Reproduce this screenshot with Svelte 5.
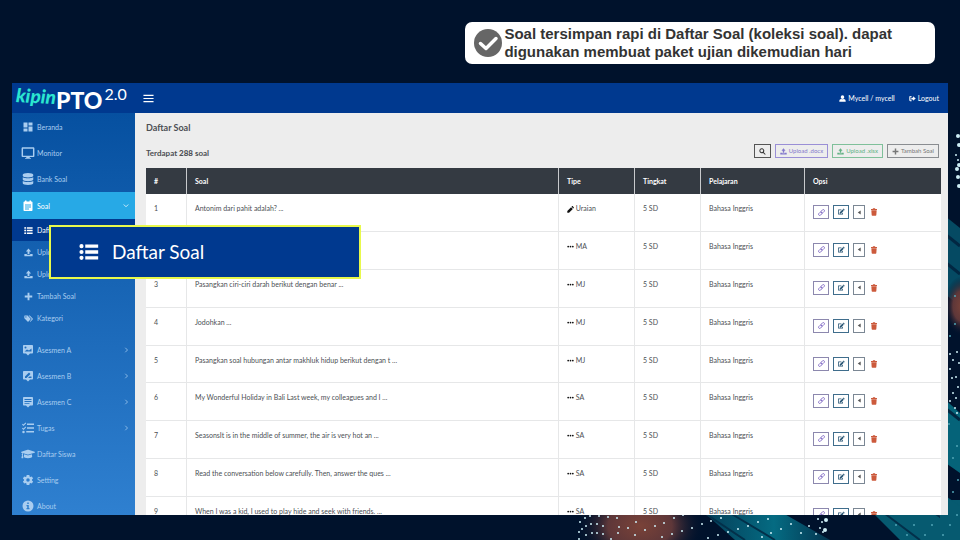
<script>
  const icons = {
    dashboard: ['0 0 24 24', 'M3 13h8V3H3v10zm0 8h8v-6H3v6zm10 0h8V11h-8v10zm0-18v6h8V3h-8z'],
    monitor: ['0 1 24 22', 'M21 2H3c-1.100 0-2 .9-2 2v13c0 1.100.9 2 2 2h6v1.500H7V22h10v-1.500h-2V19h6c1.100 0 2-.9 2-2V4c0-1.100-.9-2-2-2zm-.5 14.500h-17v-12h17v12z'],
    database: ['0 0 448 512', 'M448 73v46c0 40-100 73-224 73S0 159 0 119V73C0 33 100 0 224 0s224 33 224 73zM448 176v103c0 40-100 73-224 73S0 319 0 279V176c48 33 136 49 224 49s176-16 224-49zm0 160v103c0 40-100 73-224 73S0 479 0 439V336c48 33 136 49 224 49s176-16 224-49z'],
    event: ['0 0 24 24', 'M19 3h-1V1h-3v2H9V1H6v2H5c-1.100 0-2 .9-2 2v15c0 1.100.9 2 2 2h14c1.100 0 2-.9 2-2V5c0-1.100-.9-2-2-2zM6 9h12v2H6V9zm0 4h12v2H6v-2zm0 4h8v2H6v-2z'],
    list: ['0 0 24 24', 'M3 2.500a2.500 2.500 0 1 1 0 5 2.500 2.500 0 0 1 0-5zm0 7a2.500 2.500 0 1 1 0 5 2.500 2.500 0 0 1 0-5zm0 7a2.500 2.500 0 1 1 0 5 2.500 2.500 0 0 1 0-5zM7.500 3h15.500v4H7.500V3zm0 7h15.500v4H7.500v-4zm0 7h15.500v4H7.500v-4z'],
    upload: ['0 0 24 24', 'M9.500 16V9H5l7-8 7 8h-4.500v7h-5zM1 16h6.500v2h9v-2H23v6H1v-6z'],
    plus: ['0 0 24 24', 'M9.500 2h5v7.500H22v5h-7.500V22h-5v-7.500H2v-5h7.500V2z'],
    tags: ['0 0 28 24', 'M1 4v7l10 10c1 1 2 1 3 0l6-6c1-1 1-2 0-3L11 3H2L1 4zm5 1a2 2 0 1 1 0 4 2 2 0 0 1 0-4zM14 3h4l9 9c1 1 1 2 0 3l-7 7-2-1 5-6c1-1 1-2 0-3l-9-9z'],
    image: ['0 0 24 24', 'M4 2h16c1.100 0 2 .9 2 2v13c0 1.100-.9 2-2 2h-4l-4 4-4-4H4c-1.100 0-2-.9-2-2V4c0-1.100.9-2 2-2zm1 13h14V9l-5 4-4-2-5 4zM7 5a2 2 0 1 0 0 4 2 2 0 0 0 0-4z'],
    review: ['0 0 24 24', 'M4 2h16c1.100 0 2 .9 2 2v13c0 1.100-.9 2-2 2h-4l-4 4-4-4H4c-1.100 0-2-.9-2-2V4c0-1.100.9-2 2-2zm2 14h3l8-8-3-3-8 8v3zm6 0h7v-3h-4l-3 3z'],
    comment: ['0 0 24 24', 'M4 2h16c1.100 0 2 .9 2 2v13c0 1.100-.9 2-2 2h-4l-4 4-4-4H4c-1.100 0-2-.9-2-2V4c0-1.100.9-2 2-2zm1 4v2h14V6H5zm0 4v2h14v-2H5zm0 4v1.500h10V14H5z'],
    tasks: ['0 0 24 22', 'M0 4l1.500-1.500L3 4l4-4 1.500 1.500L3 7 0 4zm0 8l1.500-1.500L3 12l4-4 1.500 1.500L3 15l-3-3zm3 4.500a2.500 2.500 0 1 1 0 5 2.500 2.500 0 0 1 0-5zM10 2h14v3H10V2zm0 7.500h14v3H10v-3zM8.500 17H24v3H8.500v-3z'],
    cap: ['0 0 640 512', 'M622 153L343 67c-15-4-31-4-47 0L18 153c-24 7-24 38 0 46l48 15c-10 13-17 29-18 47-9 5-16 15-16 27 0 11 6 20 14 26L20 429c-2 10 6 19 16 19h56c10 0 18-9 16-19L82 314c8-6 14-15 14-26 0-12-6-21-16-27 1-15 9-28 21-37l196 60c9 3 26 7 46 0l279-85c24-7 24-38 0-46zM353 315c-29 9-53 4-66 0l-145-44-14 113c0 35 86 64 192 64s192-29 192-64l-14-113-145 44z'],
    cog: ['0 0 24 24', 'M19.900 13.200a8 8 0 0 0 0-2.400l2.300-1.700-2.400-4.200-2.700 1.100a8 8 0 0 0-2-1.200L14.700 2H9.300l-.4 2.800a8 8 0 0 0-2 1.200L4.200 4.900 1.800 9.100l2.300 1.700a8 8 0 0 0 0 2.400l-2.300 1.700 2.400 4.200L6.900 18a8 8 0 0 0 2 1.200l.4 2.800h5.400l.4-2.800a8 8 0 0 0 2-1.200l2.700 1.100 2.400-4.200-2.300-1.700zM12 15.500a3.500 3.500 0 1 1 0-7 3.500 3.500 0 0 1 0 7z'],
    info: ['0 0 24 24', 'M12 1a11 11 0 1 0 0 22 11 11 0 0 0 0-22zm-1.500 4h3v3h-3V5zM9 10h4.500v6H15v2.500H9V16h1.500v-3.500H9V10z'],
    user: ['0 0 24 24', 'M12 1a6 6 0 0 1 6 6v1a6 6 0 0 1-12 0V7a6 6 0 0 1 6-6zM1 22c0-5 3-8 7-8 2 1 6 1 8 0 4 0 7 3 7 8v1H1v-1z'],
    logout: ['0 0 24 24', 'M9 3v3H5v12h4v3H4c-1.700 0-3-1.300-3-3V6c0-1.700 1.300-3 3-3h5zm5 1l9 8-9 8v-5H8V9h6V4z'],
    search: ['0 0 24 24', 'M9.500 1a8.500 8.500 0 0 1 6.900 13.500l6.600 6.500-2.500 2.500-6.500-6.600A8.500 8.500 0 1 1 9.500 1zm0 3.500a5 5 0 1 0 0 10 5 5 0 0 0 0-10z'],
    pencil: ['0 0 24 24', 'M1 17L14 4l6 6L7 23H1v-6zM15.500 2.500L17 1c1-1 2-1 3 0l3 3c1 1 1 2 0 3l-1.500 1.500-6-6z'],
    dots: ['0 0 24 24', 'M4 9a3 3 0 1 1 0 6 3 3 0 0 1 0-6zm8 0a3 3 0 1 1 0 6 3 3 0 0 1 0-6zm8 0a3 3 0 1 1 0 6 3 3 0 0 1 0-6z'],
    edit: ['0 0 26 24', 'M15 4H5c-1 0-1.500.5-1.500 1.500V19c0 1 .5 1.500 1.500 1.500h13c1 0 1.500-.5 1.500-1.500v-5l-2.500 2v2H6V6.500h7L15 4zM9 13l9-9 4 4-9 9H9v-4zM19 3l2-2 4 4-2 2-4-4z'],
    back: ['0 0 24 24', 'M16 5v14L6 12l10-7z'],
    trash: ['0 0 20 24', 'M1 3h5l1-2h6l1 2h5v3H1V3zm1 4h16l-1 14c0 1-1 2-2 2H5c-1 0-2-1-2-2L2 7z'],
    bars: ['0 0 24 24', 'M1 4h22v2.500H1V4zm0 6.700h22v2.500H1v-2.500zm0 6.800h22V20H1v-2.500z']
  };

  const topMenu = [
    { icon: 'dashboard', label: 'Beranda' },
    { icon: 'monitor', label: 'Monitor', wide: true },
    { icon: 'database', label: 'Bank Soal' },
    { icon: 'event', label: 'Soal', active: true }
  ];

  const subMenu = [
    { icon: 'list', label: 'Daftar Soal', active: true },
    { icon: 'upload', label: 'Upload .docx' },
    { icon: 'upload', label: 'Upload .xlsx' },
    { icon: 'plus', label: 'Tambah Soal' },
    { icon: 'tags', label: 'Kategori' }
  ];

  const bottomMenu = [
    { icon: 'image', label: 'Asesmen A', more: true },
    { icon: 'review', label: 'Asesmen B', more: true },
    { icon: 'comment', label: 'Asesmen C', more: true },
    { icon: 'tasks', label: 'Tugas', more: true },
    { icon: 'cap', label: 'Daftar Siswa', wide: true },
    { icon: 'cog', label: 'Setting' },
    { icon: 'info', label: 'About' }
  ];

  // the second row lies under the callout up to its type column
  const rows = [
    { no: 1, soal: 'Antonim dari pahit adalah? ...', tipe: 'Uraian' },
    { no: '', soal: '', tipe: 'MA' },
    { no: 3, soal: 'Pasangkan ciri-ciri darah berikut dengan benar ...', tipe: 'MJ' },
    { no: 4, soal: 'Jodohkan ...', tipe: 'MJ' },
    { no: 5, soal: 'Pasangkan soal hubungan antar makhluk hidup berikut dengan t ...', tipe: 'MJ' },
    { no: 6, soal: 'My Wonderful Holiday in Bali Last week, my colleagues and I ...', tipe: 'SA' },
    { no: 7, soal: 'SeasonsIt is in the middle of summer, the air is very hot an ...', tipe: 'SA' },
    { no: 8, soal: 'Read the conversation below carefully. Then, answer the ques ...', tipe: 'SA' },
    { no: 9, soal: 'When I was a kid, I used to play hide and seek with friends. ...', tipe: 'SA' }
  ];

  // bright specks of the backdrop, as [x, y, radius]
  const specks = [
    [580, 522, 1], [585, 518, 1], [590, 516, 1], [599, 516, 1], [608, 517, 1], [579, 532, 1], [582, 529, 1],
    [586, 526, 1], [591, 524, 1], [597, 524, 1], [603, 526, 1], [586, 535, 1], [592, 533, 1], [597, 533, 1],
    [603, 534, 1], [579, 539, 1], [611, 539, 1], [617, 518, 1], [619, 527, 1], [618, 533, 1], [636, 522, 1],
    [628, 528, 1], [635, 535, 1], [645, 530, 1], [655, 526, 1], [664, 523, 1], [674, 518, 1], [683, 515, 1],
    [662, 537, 1], [672, 534, 1], [682, 531, 1], [692, 528, 1], [702, 524, 1], [711, 521, 1], [721, 518, 1],
    [708, 538, 1], [718, 535, 1], [728, 532, 1], [738, 529, 1], [748, 526, 1], [758, 522, 1], [768, 519, 1],
    [762, 537, 1], [771, 533, 1], [781, 529, 1], [791, 524, 1], [801, 533, 1], [809, 526, 1], [818, 519, 1],
    [816, 534, 1], [820, 528, 1], [822, 522, 1], [826, 520, 2], [825, 530, 2], [823, 532, 1],
    [958, 136, 2], [959, 145, 2], [956, 155, 1], [958, 160, 1], [959, 165, 2], [957, 169, 2], [958, 177, 2], [959, 186, 2],
    [950, 354, 1], [957, 352, 1], [953, 360, 1], [959, 363, 1], [950, 369, 1], [952, 378, 1], [956, 377, 1],
    [958, 387, 1], [953, 393, 1], [956, 398, 1], [950, 401, 1], [955, 408, 1], [957, 413, 1]
  ];
  const faintSpecks = [
    [914, 525], [932, 525], [950, 525], [907, 535], [925, 535], [943, 535], [896, 525], [950, 336], [955, 324],
    [949, 424], [957, 446], [953, 458], [958, 480], [953, 492], [957, 515], [955, 296]
  ];
</script>

{#snippet icon(name)}
  <svg class="icon" viewBox={icons[name][0]} aria-hidden="true">
    <path d={icons[name][1]} fill-rule="evenodd" />
  </svg>
{/snippet}

{#snippet linkIcon()}
  <svg class="icon" viewBox="0 0 24 24" aria-hidden="true">
    <g fill="none" stroke="currentColor" stroke-width="3">
      <rect x="10" y="4" width="13" height="8" rx="4" transform="rotate(-45 16 8)" />
      <rect x="1" y="12" width="13" height="8" rx="4" transform="rotate(-45 8 16)" />
    </g>
  </svg>
{/snippet}

{#snippet menuItem(item)}
  <a href="#menu" class="item" class:active={item.active}>
    <span class="item-icon" class:wide={item.wide}>{@render icon(item.icon)}</span>
    <span>{item.label}</span>
    {#if item.more || item.active}
      <svg class="chevron" viewBox="0 0 8 8" aria-hidden="true">
        <path d={item.active ? 'M1 2l3 3 3-3' : 'M3 1l3 3-3 3'} />
      </svg>
    {/if}
  </a>
{/snippet}

<div class="page">
  <svg class="backdrop" viewBox="0 0 960 540" preserveAspectRatio="xMaxYMax slice" aria-hidden="true">
    <defs>
      <linearGradient id="teal" x1="0" y1="0" x2="1" y2="0">
        <stop offset="0" stop-color="#04344f" />
        <stop offset="0.6" stop-color="#056b82" />
        <stop offset="1" stop-color="#04344f" />
      </linearGradient>
      <radialGradient id="rust">
        <stop offset="0" stop-color="#7a4238" />
        <stop offset="0.5" stop-color="#5e3739" />
        <stop offset="1" stop-color="#00122c" stop-opacity="0" />
      </radialGradient>
    </defs>
    <ellipse cx="640" cy="526" rx="64" ry="44" fill="url(#rust)" />
    <path d="M690 500h70l70 40h-95z" fill="url(#teal)" />
    <path d="M860 500h100v40h-60z" fill="#065a70" />
    <path d="M700 510l45 30M725 510l50 30M880 510l40 30M930 510l20 14" stroke="#03304a" stroke-width="2" />
    <path d="M940 212l20 16v78l-20-16z" fill="#054a63" />
    <ellipse cx="962" cy="306" rx="18" ry="30" fill="url(#rust)" />
    <path d="M940 395l20 18v60l-20-14z" fill="#056379" />
    <path d="M940 492l20 14v34h-20z" fill="#065a70" />
    <path d="M940 230l20 16M940 258l20 16M940 404l20 16" stroke="#022742" stroke-width="3" />
    {#each specks as [x, y, r]}
      <circle cx={x} cy={y} {r} fill="#cdeef6" />
    {/each}
    {#each faintSpecks as [x, y]}
      <circle cx={x} cy={y} r="1" fill="#4fa3b5" />
    {/each}
  </svg>

  <div class="note">
    <svg class="check" viewBox="0 0 28 28" aria-hidden="true">
      <circle cx="14" cy="14" r="14" fill="#666" />
      <path d="M6.500 14.500l5.500 5L22 9.500" fill="none" stroke="#fff" stroke-width="3.500" stroke-linecap="round" stroke-linejoin="round" />
    </svg>
    <p>Soal tersimpan rapi di Daftar Soal (koleksi soal). dapat<br />digunakan membuat paket ujian dikemudian hari</p>
  </div>

  <div class="window">
    <header>
      <a href="#home" class="logo">
        <span class="kipin">kipin</span><span class="pto">PTO</span><span class="version">2.0</span>
      </a>
      <button class="toggle" aria-label="Menu">{@render icon('bars')}</button>
      <nav class="account">
        <a href="#profile">{@render icon('user')} Mycell / mycell</a>
        <a href="#logout">{@render icon('logout')} Logout</a>
      </nav>
    </header>

    <div class="body">
      <nav class="sidebar">
        {#each topMenu as item}
          {@render menuItem(item)}
        {/each}
        <div class="submenu">
          {#each subMenu as item}
            <a href="#submenu" class="subitem" class:active={item.active}>
              <span class="item-icon">{@render icon(item.icon)}</span>
              <span>{item.label}</span>
            </a>
          {/each}
        </div>
        {#each bottomMenu as item}
          {@render menuItem(item)}
        {/each}
      </nav>

      <main>
        <h1>Daftar Soal</h1>
        <div class="toolbar">
          <h2>Terdapat <b>288</b> soal</h2>
          <button class="search" aria-label="Cari">{@render icon('search')}</button>
          <button class="docx">{@render icon('upload')} Upload .docx</button>
          <button class="xlsx">{@render icon('upload')} Upload .xlsx</button>
          <button>{@render icon('plus')} Tambah Soal</button>
        </div>

        <table>
          <thead>
            <tr>
              <th class="no">#</th>
              <th>Soal</th>
              <th class="tipe">Tipe</th>
              <th class="tingkat">Tingkat</th>
              <th class="pelajaran">Pelajaran</th>
              <th class="opsi">Opsi</th>
            </tr>
          </thead>
          <tbody>
            {#each rows as row}
              <tr>
                <td>{row.no}</td>
                <td>{row.soal}</td>
                <td><span class="kind">{@render icon(row.tipe === 'Uraian' ? 'pencil' : 'dots')}</span> {row.tipe}</td>
                <td>5 SD</td>
                <td>Bahasa Inggris</td>
                <td class="options">
                  <div class="actions">
                    <button class="link" aria-label="Tautan">{@render linkIcon()}</button>
                    <button class="edit" aria-label="Ubah">{@render icon('edit')}</button>
                    <button class="back" aria-label="Kembali">{@render icon('back')}</button>
                    <button class="trash" aria-label="Hapus">{@render icon('trash')}</button>
                  </div>
                </td>
              </tr>
            {/each}
          </tbody>
        </table>
      </main>
    </div>
  </div>

  <div class="callout">
    {@render icon('list')}
    <span>Daftar Soal</span>
  </div>
</div>

<style>
  :global(body) {
    background: #00122c;
  }

  .page {
    position: relative;
    display: flex;
    flex-direction: column;
    box-sizing: border-box;
    height: 100vh;
    padding: 22px 12px 25px;
    overflow: hidden;
    font-family: Lato, 'Noto Sans', sans-serif;
    font-size: 7px;
    line-height: 10px;
    color: #4c4f54;
  }

  .backdrop {
    position: absolute;
    inset: 0;
    width: 100%;
    height: 100%;
  }

  a {
    color: inherit;
    text-decoration: none;
  }

  button {
    padding: 0;
    border: 0;
    background: none;
    color: inherit;
    font: inherit;
    cursor: pointer;
  }

  .icon {
    display: block;
    flex: none;
    width: 7px;
    height: 7px;
    fill: currentColor;
  }

  .note {
    position: relative;
    display: flex;
    align-items: center;
    align-self: flex-end;
    gap: 2px;
    box-sizing: border-box;
    min-height: 42px;
    margin: 0 13px 19px 0;
    padding: 0 43px 0 9px;
    border-radius: 7px;
    background: #fff;
  }

  .note p {
    margin: 0;
    font: bold 15px/18px 'Liberation Sans', Arial, sans-serif;
    color: #333;
    white-space: nowrap;
  }

  .check {
    flex: none;
    width: 28px;
    height: 28px;
  }

  .window {
    position: relative;
    display: flex;
    flex: 1;
    flex-direction: column;
    min-height: 0;
    overflow: hidden;
    background: #ededed;
  }

  header {
    display: flex;
    flex: none;
    align-items: center;
    height: 30px;
    padding-right: 9px;
    background: #00398f;
    color: #fff;
  }

  .logo {
    display: flex;
    align-items: center;
    width: 127px;
    padding-left: 4px;
  }

  .kipin {
    margin-top: -4px;
    font: italic 900 19px/22px Lato, sans-serif;
    color: #2be6d0;
    transform: rotate(3deg);
  }

  .pto {
    margin-top: 4px;
    font: 900 23px/24px Lato, sans-serif;
  }

  .version {
    margin: -9px 0 0 2px;
    font: 16px/18px Lato, sans-serif;
  }

  .toggle .icon {
    width: 11px;
    height: 11px;
  }

  .account {
    display: flex;
    gap: 14px;
    margin-left: auto;
  }

  .account a {
    display: flex;
    align-items: center;
    gap: 2px;
  }

  .body {
    display: flex;
    flex: 1;
    min-height: 0;
  }

  .sidebar {
    flex: none;
    box-sizing: border-box;
    width: 123px;
    padding-top: 1px;
    overflow: hidden;
    background: linear-gradient(#0650a0, #2f80d0);
    color: #a9cdf0;
  }

  .item,
  .subitem {
    display: flex;
    align-items: center;
    height: 26px;
    padding: 0 6px 0 9px;
  }

  .item.active {
    height: 27px;
    background: #27a9e6;
    color: #fff;
  }

  .item-icon {
    display: flex;
    justify-content: center;
    width: 14px;
    margin-right: 2px;
  }

  .item-icon .icon {
    width: 12px;
    height: 12px;
  }

  .item-icon.wide .icon {
    width: 14px;
    height: 14px;
  }

  .submenu {
    padding-bottom: 8px;
  }

  .subitem {
    height: 22px;
  }

  .subitem .item-icon .icon {
    width: 9px;
    height: 9px;
  }

  .subitem.active {
    background: #00398f;
    color: #fff;
  }

  .chevron {
    width: 6px;
    height: 6px;
    margin-left: auto;
    fill: none;
    stroke: currentColor;
  }

  main {
    flex: 1;
    min-width: 0;
    padding: 9px 7px 0 11px;
  }

  h1,
  h2 {
    margin: 0;
    font-size: 9px;
    font-weight: bold;
    line-height: 12px;
  }

  h2 {
    margin-right: auto;
    padding-top: 4px;
    font-size: 8px;
    line-height: 10px;
  }

  .toolbar {
    display: flex;
    align-items: center;
    gap: 4px;
    margin: 10px 2px 10px 0;
  }

  .toolbar button {
    display: flex;
    align-items: center;
    gap: 2px;
    height: 14px;
    padding: 0 4px;
    border: 1px solid #8a8d91;
    font-size: 6px;
    color: #777;
  }

  .toolbar .search {
    border-color: #555;
    color: #333;
  }

  .toolbar .docx {
    border-color: #9a8fd6;
    color: #8479cc;
  }

  .toolbar .xlsx {
    border-color: #7fc09a;
    color: #62b184;
  }

  table {
    width: 100%;
    border-collapse: collapse;
    table-layout: fixed;
    background: #fff;
  }

  th {
    height: 26px;
    padding: 0 8px;
    border-left: 1px solid #c8cacd;
    background: #343a42;
    color: #fff;
    text-align: left;
  }

  th:first-child,
  td:first-child {
    border-left: 0;
  }

  td {
    box-sizing: border-box;
    height: 38px;
    padding: 9px 8px 0;
    border-bottom: 1px solid #e6e7e8;
    border-left: 1px solid #e6e7e8;
    vertical-align: top;
  }

  tr:nth-child(4n + 1) td {
    height: 37px;
  }

  .no {
    width: 24px;
  }

  .tipe {
    width: 59px;
  }

  .tingkat {
    width: 49px;
  }

  .pelajaran {
    width: 87px;
  }

  .opsi {
    width: 120px;
  }

  .kind {
    display: inline-block;
    vertical-align: middle;
    color: #111;
  }

  td.options {
    padding-top: 11px;
  }

  .actions {
    display: flex;
    align-items: center;
    gap: 4px;
  }

  .actions button {
    display: flex;
    align-items: center;
    justify-content: center;
    box-sizing: border-box;
    width: 16px;
    height: 14px;
    border: 1px solid #7b8794;
    color: #555;
  }

  .actions .link {
    border-color: #8c88ae;
    color: #8068c4;
  }

  .actions .edit {
    border-color: #3f6d8c;
    color: #285574;
  }

  .actions .edit .icon {
    width: 8px;
    height: 8px;
  }

  .actions .back {
    width: 12px;
  }

  .actions .trash {
    width: 10px;
    border: 0;
    color: #cc5a3c;
  }

  .actions .trash .icon {
    width: 8px;
    height: 8px;
  }

  .callout {
    position: absolute;
    top: 225px;
    left: 49px;
    display: flex;
    align-items: center;
    gap: 13px;
    box-sizing: border-box;
    width: 312px;
    height: 54px;
    padding-left: 28px;
    border: 2px solid #e8f94c;
    background: #00398f;
    color: #fff;
    font-size: 19px;
    line-height: 24px;
  }

  .callout .icon {
    width: 20px;
    height: 20px;
  }
</style>
